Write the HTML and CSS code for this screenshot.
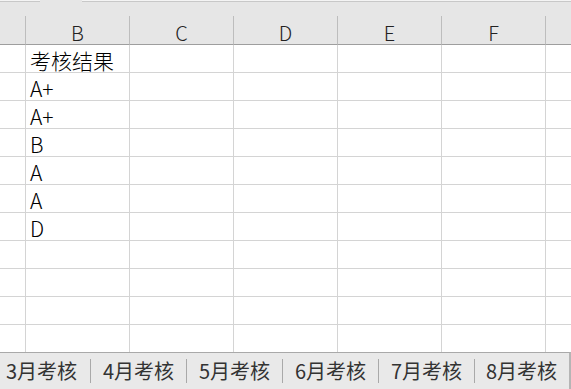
FILE: index.html
```html
<!DOCTYPE html>
<html lang="zh-CN">
<head>
    <meta charset="UTF-8">
    <meta name="viewport" content="width=device-width, initial-scale=1.0">
    <title>考核结果</title>
    <link rel="stylesheet" href="styles.css">
</head>
<body>
    <div class="sheet">
        <div class="top-strip"><span class="notch"></span></div>
        <div class="grid">
            <div class="hd"></div><div class="hd">B</div><div class="hd">C</div><div class="hd">D</div><div class="hd">E</div><div class="hd">F</div><div class="hd"></div>

            <div class="c"></div><div class="c">考核结果</div><div class="c"></div><div class="c"></div><div class="c"></div><div class="c"></div><div class="c"></div>
            <div class="c"></div><div class="c">A+</div><div class="c"></div><div class="c"></div><div class="c"></div><div class="c"></div><div class="c"></div>
            <div class="c"></div><div class="c">A+</div><div class="c"></div><div class="c"></div><div class="c"></div><div class="c"></div><div class="c"></div>
            <div class="c"></div><div class="c">B</div><div class="c"></div><div class="c"></div><div class="c"></div><div class="c"></div><div class="c"></div>
            <div class="c"></div><div class="c">A</div><div class="c"></div><div class="c"></div><div class="c"></div><div class="c"></div><div class="c"></div>
            <div class="c"></div><div class="c">A</div><div class="c"></div><div class="c"></div><div class="c"></div><div class="c"></div><div class="c"></div>
            <div class="c"></div><div class="c">D</div><div class="c"></div><div class="c"></div><div class="c"></div><div class="c"></div><div class="c"></div>
            <div class="c"></div><div class="c"></div><div class="c"></div><div class="c"></div><div class="c"></div><div class="c"></div><div class="c"></div>
            <div class="c"></div><div class="c"></div><div class="c"></div><div class="c"></div><div class="c"></div><div class="c"></div><div class="c"></div>
            <div class="c"></div><div class="c"></div><div class="c"></div><div class="c"></div><div class="c"></div><div class="c"></div><div class="c"></div>
            <div class="c"></div><div class="c"></div><div class="c"></div><div class="c"></div><div class="c"></div><div class="c"></div><div class="c"></div>
        </div>
        <div class="tabs">
            <div class="tab first">3月考核</div>
            <div class="tab">4月考核</div>
            <div class="tab">5月考核</div>
            <div class="tab">6月考核</div>
            <div class="tab">7月考核</div>
            <div class="tab last">8月考核</div>
        </div>
    </div>
</body>
</html>
```

FILE: styles.css
```css
html, body {
    margin: 0;
    padding: 0;
    background: #ffffff;
}
.sheet {
    width: 571px;
    height: 389px;
    overflow: hidden;
    font-family: "Noto Sans CJK SC", "Noto Sans", sans-serif;
    display: flex;
    flex-direction: column;
}
.top-strip {
    height: 16px;
    flex: none;
    background: #e6e6e6;
    border-top: 1px solid #f4f4f4;
    box-shadow: inset 0 1px 0 #c8c8c8;
    box-sizing: border-box;
    position: relative;
}
.notch {
    position: absolute;
    left: 40px;
    top: -1px;
    width: 42px;
    height: 2px;
    background: #e6e6e6;
}
.grid {
    display: grid;
    flex: none;
    grid-template-columns: 26px 104px 104px 104px 104px 104px 30px;
    grid-template-rows: 29px repeat(11, 28px);
}
.hd {
    background: #e6e6e6;
    border-right: 1px solid #bdbdbd;
    border-bottom: 1px solid #9e9e9e;
    color: #222;
    font-size: 20px;
    font-weight: 300;
    line-height: 28px;
    text-align: center;
    box-sizing: border-box;
    padding-top: 3px;
}
.c {
    border-right: 1px solid #d4d4d4;
    border-bottom: 1px solid #d4d4d4;
    box-sizing: border-box;
    color: #000;
    font-size: 21px;
    font-weight: 300;
    line-height: 26px;
    padding: 2px 0 0 4px;
    white-space: nowrap;
}
.tabs {
    flex: 1;
    display: flex;
    align-items: center;
    background: #e9e9e9;
    border-top: 1px solid #a9a9a9;
    border-right: 2px solid #b5b5b5;
    box-sizing: border-box;
    margin-top: -1px;
}
.tab {
    width: 96px;
    flex: none;
    box-sizing: border-box;
    text-align: center;
    color: #333;
    font-size: 20px;
    line-height: 24px;
    border-left: 1px solid #a9a9a9;
}
.tab.first {
    width: 90px;
    border-left: none;
    text-align: left;
    padding-left: 6px;
}
.tab.last {
    width: 94px;
}
```
